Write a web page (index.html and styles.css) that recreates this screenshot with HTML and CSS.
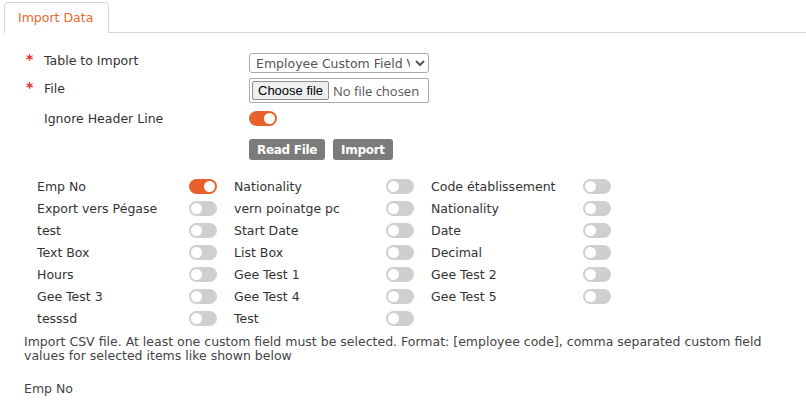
FILE: index.html
```html
<!DOCTYPE html>
<html>
<head>
<meta charset="utf-8">
<link rel="stylesheet" href="styles.css">
</head>
<body>
<div class="tabs">
  <div class="tab">Import Data</div>
  <div class="tab-rest"></div>
</div>
<div class="content">
  <div class="form-row">
    <div class="label"><span class="req">*</span>Table to Import</div>
    <select class="sel"><option>Employee Custom Field Values</option></select>
  </div>
  <div class="form-row row-file">
    <div class="label"><span class="req">*</span>File</div>
    <div class="file"><span class="file-btn">Choose file</span><span class="file-text">No file chosen</span></div>
  </div>
  <div class="form-row row-toggle">
    <div class="label"><span class="req none"></span>Ignore Header Line</div>
    <span class="toggle on"></span>
  </div>
  <div class="form-row row-btns">
    <div class="label"></div>
    <div class="btns">
      <button class="btn">Read File</button>
      <button class="btn">Import</button>
    </div>
  </div>

  <div class="grid">
    <div class="item"><span class="name">Emp No</span><span class="toggle on"></span></div>
    <div class="item"><span class="name">Nationality</span><span class="toggle"></span></div>
    <div class="item"><span class="name">Code établissement</span><span class="toggle"></span></div>
    <div class="item"><span class="name">Export vers Pégase</span><span class="toggle"></span></div>
    <div class="item"><span class="name">vern poinatge pc</span><span class="toggle"></span></div>
    <div class="item"><span class="name">Nationality</span><span class="toggle"></span></div>
    <div class="item"><span class="name">test</span><span class="toggle"></span></div>
    <div class="item"><span class="name">Start Date</span><span class="toggle"></span></div>
    <div class="item"><span class="name">Date</span><span class="toggle"></span></div>
    <div class="item"><span class="name">Text Box</span><span class="toggle"></span></div>
    <div class="item"><span class="name">List Box</span><span class="toggle"></span></div>
    <div class="item"><span class="name">Decimal</span><span class="toggle"></span></div>
    <div class="item"><span class="name">Hours</span><span class="toggle"></span></div>
    <div class="item"><span class="name">Gee Test 1</span><span class="toggle"></span></div>
    <div class="item"><span class="name">Gee Test 2</span><span class="toggle"></span></div>
    <div class="item"><span class="name">Gee Test 3</span><span class="toggle"></span></div>
    <div class="item"><span class="name">Gee Test 4</span><span class="toggle"></span></div>
    <div class="item"><span class="name">Gee Test 5</span><span class="toggle"></span></div>
    <div class="item"><span class="name">tesssd</span><span class="toggle"></span></div>
    <div class="item"><span class="name">Test</span><span class="toggle"></span></div>
  </div>

  <p class="help">Import CSV file. At least one custom field must be selected. Format: [employee code], comma separated custom field values for selected items like shown below</p>
  <p class="sample">Emp No</p>
</div>
</body>
</html>
```
FILE: styles.css
```css
* { box-sizing: border-box; }
html, body { margin: 0; padding: 0; background: #fff; }
body {
  font-family: "DejaVu Sans", "Open Sans", sans-serif;
  font-size: 12.5px;
  color: #333;
  width: 806px;
  height: 413px;
  overflow: hidden;
}
.tabs {
  display: flex;
  align-items: flex-end;
  height: 33px;
  padding-top: 2px;
}
.tab {
  margin-left: 4px;
  width: 105px;
  height: 31px;
  border: 1px solid #d6d6d6;
  border-bottom: none;
  border-radius: 4px 4px 0 0;
  color: #e8692c;
  font-size: 12.5px;
  padding-left: 13px;
  display: flex;
  align-items: center;
  padding-bottom: 1px;
  background: #fff;
}
.tab-rest {
  flex: 1;
  border-bottom: 1px solid #d6d6d6;
}
.content {
  padding: 19px 0 0 0;
}
.form-row {
  display: flex;
  align-items: flex-start;
  height: 27px;
}
.label {
  width: 249px;
  display: flex;
  padding-left: 26px;
  padding-top: 1px;
  line-height: 16px;
}
.req {
  color: #e8262c;
  width: 18px;
  font-size: 14px;
  font-weight: bold;
  line-height: 12px;
}
.sel {
  width: 180px;
  height: 20px;
  font-family: "DejaVu Sans", sans-serif;
  font-size: 12.5px;
  color: #555;
  border: 1px solid #a9a9a9;
  border-radius: 3px;
  background: #fff;
  padding: 0 2px;
  margin-top: 1px;
}
.row-file { height: 32px; }
.row-file .label { padding-top: 2px; }
.file {
  width: 180px;
  height: 25px;
  border: 1px solid #a9a9a9;
  border-radius: 2px;
  padding: 2px;
  margin-top: -1px;
  display: flex;
  align-items: center;
  white-space: nowrap;
  overflow: hidden;
}
.file-btn {
  font-family: "Liberation Sans", Arial, sans-serif;
  font-size: 13px;
  color: #000;
  height: 19px;
  line-height: 17px;
  padding: 0 5px;
  border: 1px solid #8f8f8f;
  border-radius: 2px;
  background: #efefef;
  margin-right: 4px;
  flex: none;
}
.file-text {
  font-family: "Open Sans", sans-serif;
  font-size: 13px;
  color: #555;
}
.row-toggle { height: 28px; }
.row-toggle .label { padding-top: 0; }
.btns { display: flex; gap: 8px; }
.btn {
  background: #7b7b7b;
  color: #fff;
  border: none;
  border-radius: 3px;
  font-family: "DejaVu Sans", sans-serif;
  font-weight: bold;
  font-size: 12px;
  height: 21px;
  padding: 0 8px;
  letter-spacing: -0.3px;
}
.toggle {
  display: inline-block;
  position: relative;
  width: 28px;
  height: 15px;
  border-radius: 8px;
  background: #cfcfcf;
  flex: none;
}
.toggle::after {
  content: "";
  position: absolute;
  top: 2px;
  left: 2px;
  width: 11px;
  height: 11px;
  border-radius: 50%;
  background: #fff;
}
.toggle.on { background: #e8602c; }
.toggle.on::after { left: 15px; }
.grid {
  margin-top: 9px;
  padding-left: 37px;
  display: grid;
  grid-template-columns: repeat(3, 197px);
  grid-auto-rows: 22px;
}
.item {
  display: flex;
  align-items: center;
}
.name {
  width: 152px;
  white-space: nowrap;
}
.help {
  margin: 6px 20px 0 24px;
  font-size: 12.5px;
  line-height: 14px;
  color: #444;
}
.sample {
  margin: 19px 0 0 24px;
  font-size: 12.5px;
  line-height: 14px;
  color: #444;
}
```
